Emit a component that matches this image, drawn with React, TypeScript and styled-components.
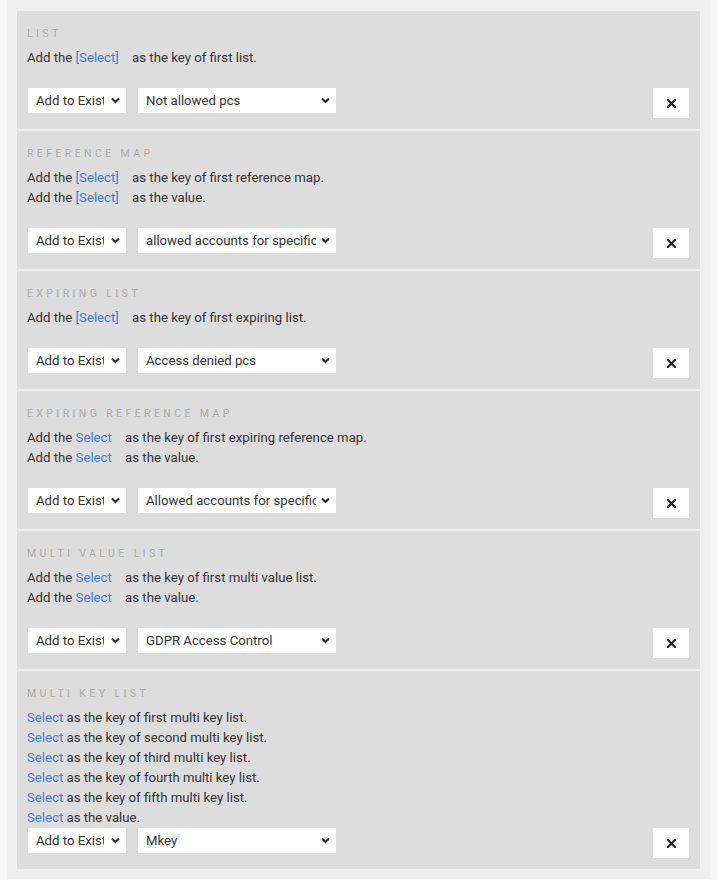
import React from "react";
import styled, { createGlobalStyle } from "styled-components";

const Global = createGlobalStyle`
  html, body { margin: 0; padding: 0; background: #f7f7f7; }
  body { font-family: Roboto, "Liberation Sans", Arial, sans-serif; color: #333; }
`;

const Page = styled.div`
  margin: 0 7px;
  padding: 11px 10px 10px;
  background: #efefef;
  display: flex;
  flex-direction: column;
  gap: 2px;
`;

const Section = styled.section`
  background: #dddddd;
  padding: 15px 11px 11px 10px;
  display: flex;
  flex-direction: column;
`;

const Title = styled.div`
  font-size: 10.5px;
  line-height: 16px;
  letter-spacing: 3.4px;
  color: #ababab;
  text-transform: uppercase;
  margin-bottom: 6px;
`;

const TextBlock = styled.div<{ $spaced: boolean }>`
  font-size: 13.2px;
  line-height: 20px;
  color: #333;
  margin-bottom: ${(p) => (p.$spaced ? "20px" : "0")};
`;

const Link = styled.span<{ $gap: boolean }>`
  color: #3b7dd8;
  cursor: pointer;
  margin-right: ${(p) => (p.$gap ? "10px" : "0")};
`;

const Controls = styled.div`
  display: flex;
  align-items: flex-start;
  gap: 12px;
  padding-left: 1px;
`;

const SelectWrap = styled.div<{ $w: number }>`
  position: relative;
  width: ${(p) => p.$w}px;
  height: 25px;
`;

const NativeSelect = styled.select<{ $pr: number }>`
  appearance: none;
  -webkit-appearance: none;
  width: 100%;
  height: 25px;
  border: none;
  border-radius: 0;
  outline: none;
  background: #fff;
  font-family: Roboto, "Liberation Sans", Arial, sans-serif;
  font-size: 13.2px;
  color: #333;
  padding: 0 ${(p) => p.$pr}px 0 8px;
  margin: 0;
`;

const Chevron = styled.svg`
  position: absolute;
  right: 6px;
  top: 9px;
  pointer-events: none;
`;

const Spacer = styled.div`
  flex: 1;
`;

const CloseButton = styled.button`
  width: 36px;
  height: 30px;
  border: none;
  background: #fff;
  display: flex;
  align-items: center;
  justify-content: center;
  padding: 0;
  cursor: pointer;
`;

type Line = { pre?: string; link: string; post: string; gap: boolean };

type SectionData = {
  title: string;
  lines: Line[];
  value: string;
  spaced: boolean;
};

const sections: SectionData[] = [
  {
    title: "List",
    lines: [{ pre: "Add the ", link: "[Select]", post: " as the key of first list.", gap: true }],
    value: "Not allowed pcs",
    spaced: true,
  },
  {
    title: "Reference Map",
    lines: [
      { pre: "Add the ", link: "[Select]", post: " as the key of first reference map.", gap: true },
      { pre: "Add the ", link: "[Select]", post: " as the value.", gap: true },
    ],
    value: "allowed accounts for specific",
    spaced: true,
  },
  {
    title: "Expiring List",
    lines: [{ pre: "Add the ", link: "[Select]", post: " as the key of first expiring list.", gap: true }],
    value: "Access denied pcs",
    spaced: true,
  },
  {
    title: "Expiring Reference Map",
    lines: [
      { pre: "Add the ", link: "Select", post: " as the key of first expiring reference map.", gap: true },
      { pre: "Add the ", link: "Select", post: " as the value.", gap: true },
    ],
    value: "Allowed accounts for specific",
    spaced: true,
  },
  {
    title: "Multi Value List",
    lines: [
      { pre: "Add the ", link: "Select", post: " as the key of first multi value list.", gap: true },
      { pre: "Add the ", link: "Select", post: " as the value.", gap: true },
    ],
    value: "GDPR Access Control",
    spaced: true,
  },
  {
    title: "Multi Key List",
    lines: [
      { link: "Select", post: " as the key of first multi key list.", gap: false },
      { link: "Select", post: " as the key of second multi key list.", gap: false },
      { link: "Select", post: " as the key of third multi key list.", gap: false },
      { link: "Select", post: " as the key of fourth multi key list.", gap: false },
      { link: "Select", post: " as the key of fifth multi key list.", gap: false },
      { link: "Select", post: " as the value.", gap: false },
    ],
    value: "Mkey",
    spaced: false,
  },
];

const ChevronIcon = () => (
  <Chevron width="9" height="7" viewBox="0 0 9 7">
    <polyline points="1,1.5 4.5,5 8,1.5" fill="none" stroke="#222" strokeWidth="2" />
  </Chevron>
);

const Dropdown = ({ width, value, pr }: { width: number; value: string; pr: number }) => (
  <SelectWrap $w={width}>
    <NativeSelect defaultValue={value} $pr={pr}>
      <option value={value}>{value}</option>
    </NativeSelect>
    <ChevronIcon />
  </SelectWrap>
);

const CloseIcon = () => (
  <svg width="9" height="9" viewBox="0 0 9 9">
    <path d="M1 1 L8 8 M8 1 L1 8" stroke="#222" strokeWidth="2.2" strokeLinecap="square" />
  </svg>
);

export default function App() {
  return (
    <>
      <Global />
      <Page>
        {sections.map((s) => (
          <Section key={s.title}>
            <Title>{s.title}</Title>
            <TextBlock $spaced={s.spaced}>
              {s.lines.map((l, i) => (
                <div key={i}>
                  {l.pre}
                  <Link $gap={l.gap}>{l.link}</Link>
                  {l.post}
                </div>
              ))}
            </TextBlock>
            <Controls>
              <Dropdown width={98} value="Add to Existing" pr={22} />
              <Dropdown width={198} value={s.value} pr={20} />
              <Spacer />
              <CloseButton aria-label="Remove">
                <CloseIcon />
              </CloseButton>
            </Controls>
          </Section>
        ))}
      </Page>
    </>
  );
}
